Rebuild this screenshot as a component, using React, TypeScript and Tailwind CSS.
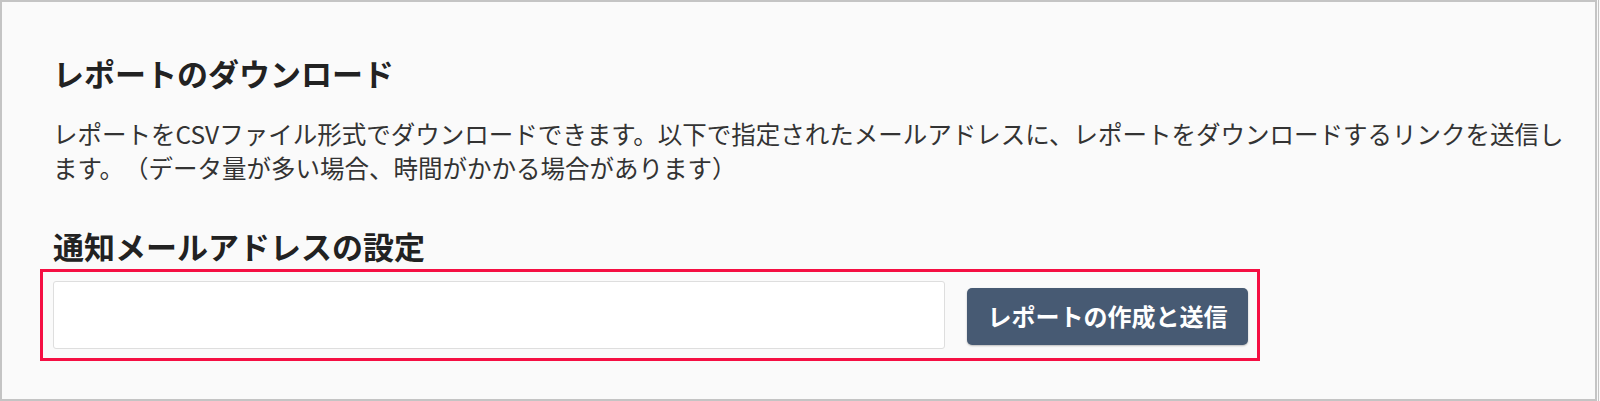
import React from "react";

const jp = "font-['Noto_Sans_CJK_JP','Noto_Sans',sans-serif]";

export default function App() {
  return (
    <div className={`flex h-[401px] w-[1600px] bg-[#f9f9f9] [text-spacing-trim:space-all] ${jp}`}>
      <section className="h-[401px] w-[1597px] border-2 border-[#c4c4c4] bg-[#fafafa] pl-[51px] pt-[51px]">
        <h2 className="text-[31px] font-bold leading-[40px] text-[#222222]">
          レポートのダウンロード
        </h2>
        <p className="mt-[24px] w-[1522px] text-[24.5px] leading-[34px] text-[#333333]">
          レポートをCSVファイル形式でダウンロードできます。以下で指定されたメールアドレスに、レポートをダウンロードするリンクを送信します。（データ量が多い場合、時間がかかる場合があります）
        </p>
        <h3 className="mt-[41px] text-[31px] font-bold leading-[40px] text-[#222222]">
          通知メールアドレスの設定
        </h3>
        <div className="ml-[-13px] mt-[3px] flex h-[92px] w-[1220px] items-center gap-[22px] border-[3px] border-[#f50f43] pl-[10px] pr-[9px]">
          <input
            type="email"
            className="h-[68px] w-[892px] rounded-[3px] border border-[#dedede] bg-white px-3 text-[22px] outline-none"
          />
          <button
            type="button"
            className="mt-[2px] flex h-[57px] w-[281px] items-center justify-center rounded-[5px] bg-[#475a73] text-[24px] font-bold text-white shadow-[0_1px_2px_rgba(0,0,0,0.25)]"
          >
            レポートの作成と送信
          </button>
        </div>
      </section>
      <div className="ml-[1px] h-[401px] w-[1px] bg-[#c4c4c4]" />
    </div>
  );
}
